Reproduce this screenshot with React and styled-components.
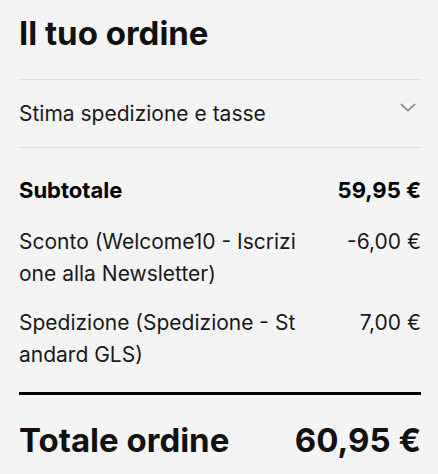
import React from 'react'
import styled, { createGlobalStyle } from 'styled-components'

const GlobalStyle = createGlobalStyle`
  html, body {
    margin: 0;
    padding: 0;
    background: #f4f4f4;
  }
  body {
    font-family: Inter, 'Noto Sans', sans-serif;
    color: #111;
  }
`

const rows = [
  { label: 'Sconto (Welcome10 - Iscrizione alla Newsletter)', value: '-6,00 €' },
  { label: 'Spedizione (Spedizione - Standard GLS)', value: '7,00 €' },
]

const App = () => {
  return (
    <>
      <GlobalStyle />
      <Wrapper>
        <Title>Il tuo ordine</Title>
        <Estimate>
          <span>Stima spedizione e tasse</span>
          <svg width='16' height='9' viewBox='0 0 16 9' fill='none'>
            <path d='M1 1L8 7.8L15 1' stroke='#7a7a7a' strokeWidth='1.5' />
          </svg>
        </Estimate>
        <Totals>
          <Row $strong>
            <Label>Subtotale</Label>
            <Value>59,95 €</Value>
          </Row>
          {rows.map((row) => (
            <Row key={row.label}>
              <Label>{row.label}</Label>
              <Value>{row.value}</Value>
            </Row>
          ))}
        </Totals>
        <GrandTotal>
          <span>Totale ordine</span>
          <span>60,95 €</span>
        </GrandTotal>
      </Wrapper>
    </>
  )
}

const Wrapper = styled.div`
  width: 402px;
  padding: 0 17px 0 19px;
`

const Title = styled.h2`
  margin: 0;
  padding: 13px 0 26px;
  font-size: 33px;
  font-weight: 700;
  line-height: 40px;
  border-bottom: 1px solid #dcdcdc;
`

const Estimate = styled.div`
  display: flex;
  justify-content: space-between;
  align-items: flex-start;
  padding: 19px 0 18px;
  font-size: 21px;
  line-height: 30px;
  color: #1a1a1a;
  border-bottom: 1px solid #dcdcdc;
  svg {
    margin-top: 4px;
    margin-right: 5px;
  }
`

const Totals = styled.div`
  display: flex;
  flex-direction: column;
  gap: 17px;
  padding: 26px 0 21px;
  border-bottom: 3px solid #000;
`

const Row = styled.div`
  display: flex;
  justify-content: space-between;
  align-items: flex-start;
  margin-bottom: ${(p) => (p.$strong ? '3px' : '0')};
  font-size: ${(p) => (p.$strong ? '22px' : '21px')};
  font-weight: ${(p) => (p.$strong ? 700 : 400)};
  line-height: 32px;
  color: ${(p) => (p.$strong ? '#000' : '#1a1a1a')};
`

const Label = styled.div`
  width: 282px;
  word-break: break-all;
`

const Value = styled.div`
  white-space: nowrap;
  text-align: right;
`

const GrandTotal = styled.div`
  display: flex;
  justify-content: space-between;
  padding-top: 25px;
  font-size: 33px;
  font-weight: 700;
  line-height: 40px;
`

export default App
